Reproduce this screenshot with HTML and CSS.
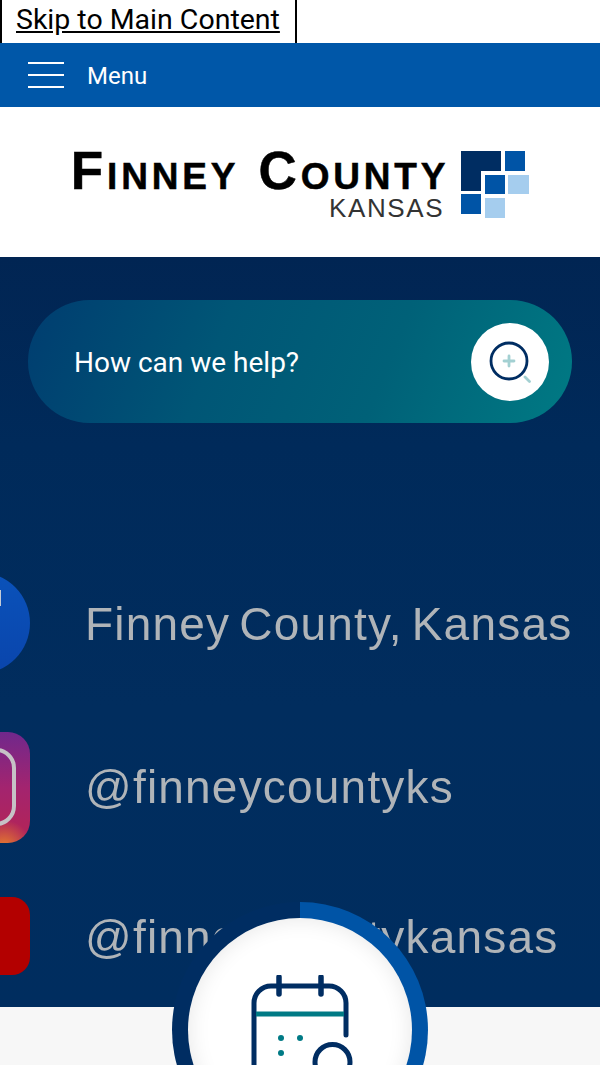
FILE: index.html
```html
<!DOCTYPE html>
<html lang="en">
<head>
  <meta charset="UTF-8" />
  <title>Finney County, Kansas</title>
  <link rel="stylesheet" href="styles.css">
</head>
<body>
  <div class="skip-bar">
    <a class="skip-link" href="#main">Skip to Main Content</a>
  </div>

  <nav class="menu-bar">
    <span class="menu-icon"><i></i><i></i><i></i></span>
    <span class="menu-label">Menu</span>
  </nav>

  <header class="logo-bar">
    <div class="logo">
      <div class="logo-text">
        <div class="logo-name"><b>F</b>INNEY <b class="second">C</b>OUNTY</div>
        <div class="logo-state">KANSAS</div>
      </div>
      <svg class="logo-mark" width="68" height="67" viewBox="0 0 68 67">
        <path fill="#002d62" d="M0 0h40v20H20v20H0z"/>
        <rect x="44" y="0" width="20" height="20" fill="#0054a6"/>
        <rect x="24" y="24" width="20" height="19" fill="#0054a6"/>
        <rect x="47" y="24" width="21" height="19" fill="#a5cdee"/>
        <rect x="0" y="43" width="20" height="20" fill="#0054a6"/>
        <rect x="24" y="47" width="20" height="20" fill="#a5cdee"/>
      </svg>
    </div>
  </header>

  <main id="main" class="hero">
    <form class="search-pill">
      <span class="search-text">How can we help?</span>
      <span class="search-btn">
        <svg width="60" height="60" viewBox="0 0 60 60" fill="none">
          <circle cx="29" cy="29" r="18" stroke="#002d62" stroke-width="2.8"/>
          <path d="M29 24v10M24 29h10M45 45l4.5 4.5" stroke="#a3d0d2" stroke-width="2.8" stroke-linecap="round"/>
        </svg>
      </span>
    </form>

    <div class="social-list">
      <div class="social-icon facebook"><span class="fb-f"></span></div>
      <div class="social-name">Finney County, Kansas</div>
      <div class="social-icon instagram"><span class="ig-ring"></span></div>
      <div class="social-name">@finneycountyks</div>
      <div class="social-icon youtube"></div>
      <div class="social-name">@finneycountykansas</div>
    </div>
  </main>

  <section class="footer-part"></section>

  <div class="quick-ring">
    <div class="quick-circle">
      <svg class="calendar" width="120" height="110" viewBox="0 0 120 110" fill="none">
        <path d="M106 60V28a17 17 0 0 0-17-17H31A17 17 0 0 0 14 28v70a17 17 0 0 0 17 17h40" stroke="#002d62" stroke-width="5" stroke-linecap="round"/>
        <path d="M39 2v17M81 2v17" stroke="#002d62" stroke-width="5.5" stroke-linecap="round"/>
        <path d="M16 39h88" stroke="#007a85" stroke-width="5"/>
        <circle cx="41" cy="63" r="3" fill="#007a85"/>
        <circle cx="60" cy="63" r="3" fill="#007a85"/>
        <circle cx="41" cy="78" r="3" fill="#007a85"/>
        <circle cx="92.5" cy="87" r="17.5" stroke="#002d62" stroke-width="5"/>
      </svg>
    </div>
  </div>
</body>
</html>
```

FILE: styles.css
```css
html, body {
  margin: 0;
  padding: 0;
}
body {
  position: relative;
  width: 600px;
  height: 1065px;
  overflow: hidden;
  background-color: white;
  font-family: Roboto, "Liberation Sans", sans-serif;
}

.skip-bar {
  height: 43px;
}
.skip-link {
  display: inline-block;
  height: 43px;
  padding: 0 15px 0 14px;
  border-left: 2px solid black;
  border-right: 2px solid black;
  font-size: 28.5px;
  line-height: 40px;
  color: black;
}

.menu-bar {
  display: flex;
  align-items: center;
  gap: 23px;
  height: 64px;
  padding-left: 28px;
  background-color: #0057a8;
  color: white;
}
.menu-icon {
  display: flex;
  flex-direction: column;
  gap: 10px;
  width: 36px;
}
.menu-icon i {
  display: block;
  height: 2px;
  background-color: white;
}
.menu-label {
  padding-top: 2px;
  font-size: 24px;
}

.logo-bar {
  display: flex;
  justify-content: center;
  height: 150px;
  padding-top: 44px;
  box-sizing: border-box;
}
.logo {
  display: flex;
  gap: 12px;
}
.logo-text {
  font-family: "Liberation Sans", Arial, sans-serif;
  color: black;
}
.logo-name {
  font-size: 37px;
  font-weight: bold;
  line-height: 40px;
  letter-spacing: 3.8px;
  white-space: nowrap;
  -webkit-text-stroke: 0.5px black;
}
.logo-name b {
  font-size: 53px;
}
.logo-name .second {
  margin-left: 6px;
}
.logo-state {
  padding-right: 5px;
  font-size: 26px;
  line-height: 22px;
  letter-spacing: 1.6px;
  text-align: right;
  color: #333;
}

.hero {
  height: 750px;
  padding: 43px 28px 0;
  box-sizing: border-box;
  overflow: hidden;
  background: linear-gradient(180deg, #012553 0%, #002a5a 25%, #012d5e 60%, #002d5f 100%);
}
.search-pill {
  display: flex;
  align-items: center;
  justify-content: space-between;
  height: 123px;
  padding: 0 23px 0 46px;
  border-radius: 62px;
  background: linear-gradient(112deg, #003d70 0%, #005676 35%, #006178 65%, #007a84 100%);
  color: white;
}
.search-text {
  padding-top: 2px;
  font-size: 28px;
}
.search-btn {
  display: flex;
  align-items: center;
  justify-content: center;
  width: 78px;
  height: 78px;
  border-radius: 50%;
  background-color: white;
}

.social-list {
  display: grid;
  grid-template-columns: 110px auto;
  grid-template-rows: 102px 115px 78px;
  row-gap: 54px;
  column-gap: 55px;
  align-items: center;
  margin: 149px 0 0 -108px;
  filter: blur(0.6px);
}
.social-name {
  padding-top: 2px;
  font-family: "Liberation Sans", Arial, sans-serif;
  font-size: 46px;
  letter-spacing: 1.2px;
  word-spacing: -5px;
  color: #b0b4b8;
  white-space: nowrap;
}
.social-icon {
  position: relative;
  overflow: hidden;
  justify-self: end;
}
.facebook {
  width: 102px;
  height: 102px;
  border-radius: 50%;
  background: linear-gradient(180deg, #0a52ba, #0a45ac);
}
.fb-f {
  position: absolute;
  right: 29px;
  top: 18px;
  width: 3px;
  height: 16px;
  background-color: #c4cbd6;
}
.instagram {
  align-self: end;
  width: 110px;
  height: 111px;
  border-radius: 22px;
  background: radial-gradient(circle at 84px 116px, #e8802a 0, rgba(232, 128, 42, 0) 28px), linear-gradient(180deg, #70288c 0%, #a3246f 50%, #b0245c 85%);
}
.ig-ring {
  position: absolute;
  right: 14px;
  top: 16px;
  width: 70px;
  height: 70px;
  border: 4px solid #c6c2c6;
  border-radius: 20px;
}
.youtube {
  width: 110px;
  height: 78px;
  border-radius: 18px;
  background-color: #b30000;
}

.footer-part {
  height: 58px;
  background-color: #f7f7f7;
}

.quick-ring {
  position: absolute;
  left: 172px;
  top: 902px;
  display: flex;
  align-items: center;
  justify-content: center;
  width: 256px;
  height: 256px;
  border-radius: 50%;
  background: conic-gradient(#0054a6 0deg 130deg, #002d62 130deg 360deg);
}
.quick-circle {
  position: relative;
  width: 224px;
  height: 224px;
  border-radius: 50%;
  background-color: white;
  box-shadow: inset 0 0 22px rgba(0, 0, 0, 0.1);
}
.calendar {
  position: absolute;
  left: 52px;
  top: 57px;
}
```
